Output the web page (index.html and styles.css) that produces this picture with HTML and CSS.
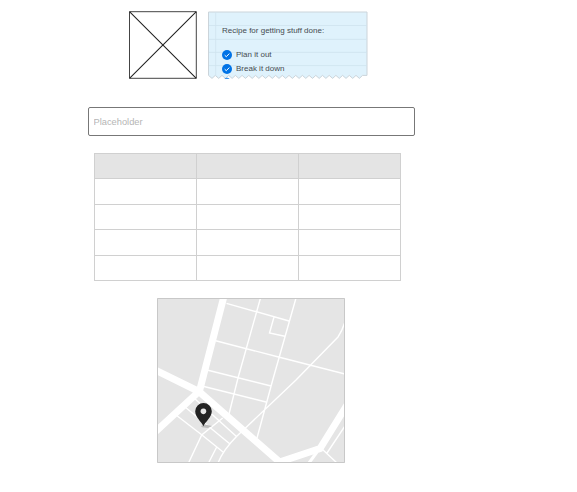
FILE: index.html
```html
<!DOCTYPE html>
<html lang="en">
<head>
<meta charset="utf-8">
<title>Wireframe</title>
<link rel="stylesheet" href="styles.css">
</head>
<body>
<main class="page">
  <div class="top">
    <svg class="image-box" viewBox="0 0 69 68">
      <path class="frame" d="M.5 .7H67.3V67.3H.5Z"/>
      <path class="cross" d="M.5 .7L67.3 67.3M67.3 .7L.5 67.3"/>
    </svg>
    <section class="note">
      <svg class="paper" viewBox="208 11 160 69">
        <path class="sheet" d="M208.5 12H367V75.4H362.5L359.4 78.4L356 75.4L352.7 78.4L349.3 75.4L346 78.4L342.6 75.4L339.3 78.4L335.9 75.4L332.6 78.4L329.2 75.4L325.9 78.4L322.5 75.4L319.2 78.4L315.8 75.4L312.5 78.4L309.1 75.4L305.8 78.4L302.4 75.4L299.1 78.4L295.7 75.4L292.4 78.4L289 75.4L285.7 78.4L282.3 75.4L279 78.4L275.6 75.4L272.3 78.4L268.9 75.4L265.6 78.4L262.2 75.4L258.9 78.4L255.5 75.4L252.2 78.4L248.8 75.4L245.5 78.4L242.1 75.4L238.8 78.4L235.4 75.4L232.1 78.4L228.7 75.4L225.4 78.4L222 75.4L218.7 78.4L215.3 75.4L212 78.4L208.5 75.4Z"/>
        <path class="rule" d="M209 25.5H367M209 39.4H367M209 52.4H367M209 65.6H367M215.7 12V76"/>
        <path class="next" d="M224.3 78.7Q227 77 229.7 78.7Z"/>
      </svg>
      <div class="note-text">
        <p class="note-title">Recipe for getting stuff done:</p>
        <p class="item"><svg class="check" viewBox="0 0 10 10"><circle cx="5" cy="5" r="5"/><path d="M2.7 5.2L4.3 6.7L7.3 3.6"/></svg>Plan it out</p>
        <p class="item"><svg class="check" viewBox="0 0 10 10"><circle cx="5" cy="5" r="5"/><path d="M2.7 5.2L4.3 6.7L7.3 3.6"/></svg>Break it down</p>
      </div>
    </section>
  </div>
  <input class="field" type="text" placeholder="Placeholder">
  <table class="grid">
    <thead><tr><th></th><th></th><th></th></tr></thead>
    <tbody>
      <tr><td></td><td></td><td></td></tr>
      <tr><td></td><td></td><td></td></tr>
      <tr><td></td><td></td><td></td></tr>
      <tr><td></td><td></td><td></td></tr>
    </tbody>
  </table>
  <svg class="map" viewBox="157 298 188 165">
    <path class="land" d="M157 298H345V463H157Z"/>
    <path class="road main" d="M224 296L199.5 391M154 369.5L199 391.5L279.5 462L320 448.5L347 405M199 391.5L154 433"/>
    <path class="road" d="M260.5 298L238 378L229 414M296 298L273 379L257 438M226.5 303.3L289 321M274 317L269.5 333L284.7 336.3M215.7 340.7L278.5 357L345 374M207 370L271 386M202 386L266 402M345 322Q342 331 338 337L296 380L237 436Q223 450 218 463M194 398L237 437M185 407L230 444M176 415L202 435L223 452M222.7 418L201.7 435L188.5 463M216.7 447L208.5 463M322 449L337 463M345 426L327 453"/>
    <path class="road wide" d="M317 452L309 463"/>
    <path class="shadow" d="M201 426L205 424.5L212 426L208 428L202 427.3Z"/>
    <path class="pin" fill-rule="evenodd" d="M203.4 426.3C201.5 421.8 195.2 417.4 195.2 411.3A8.3 8.3 0 0 1 211.8 411.3C211.8 417.4 205.3 421.8 203.4 426.3ZM203.4 408.4a2.9 2.9 0 1 0 .01 0Z"/>
    <path class="edge" d="M157.5 298.5H344.5V462.5H157.5Z"/>
  </svg>
</main>
</body>
</html>
```
FILE: styles.css
```css
* { box-sizing: border-box; }
body { margin: 0; background: #fff; font-family: "Liberation Sans", Arial, sans-serif; }
.page { width: 328px; margin-left: 88px; padding-top: 11px; display: flex; flex-direction: column; align-items: flex-start; }
.top { display: flex; margin-left: 41px; gap: 10px; height: 69px; }
.image-box { width: 69px; height: 68px; margin-top: 0; fill: none; overflow: visible; }
.frame { stroke: #444; stroke-width: 1; }
.cross { stroke: #222; stroke-width: 1.1; }
.note { display: grid; width: 160px; height: 69px; }
.paper, .note-text { grid-area: 1 / 1; }
.paper { width: 160px; height: 69px; }
.sheet { fill: #dff2fc; stroke: #cbd4da; stroke-width: 1; }
.rule { stroke: #cee2ee; stroke-width: .8; fill: none; }
.next { fill: #0073e6; }
.note-text { position: relative; padding: 13px 0 0 14px; font-size: 8px; color: #454b50; }
.note-title, .item { margin: 0; line-height: 14px; white-space: nowrap; }
.note-title { margin-bottom: 10px; }
.item { display: flex; align-items: center; gap: 4px; }
.check { width: 10px; height: 10px; fill: #0073e6; }
.check path { fill: none; stroke: #fff; stroke-width: 1; }
.field { width: 327px; height: 29px; margin-top: 27px; padding: 0 5px 0 4.5px; border: 1px solid #777; border-radius: 2px; background: #fff; font: 9.3px "Liberation Sans", Arial, sans-serif; outline: 0; }
.field::placeholder { color: #b5b5b5; opacity: 1; }
.grid { width: 307px; margin: 17px 0 0 6px; border-collapse: collapse; table-layout: fixed; }
.grid th, .grid td { height: 25.4px; border: 1px solid #d0d0d0; padding: 0; }
.grid th { background: #e4e4e4; }
.map { width: 188px; height: 165px; margin: 17px 0 0 69px; }
.land { fill: #e5e5e5; }
.road { fill: none; stroke: #fff; stroke-width: 1.4; }
.main { stroke-width: 7; }
.wide { stroke-width: 3; }
.pin { fill: #222; }
.shadow { fill: #bbb; }
.edge { fill: none; stroke: #c8c8c8; }
```
